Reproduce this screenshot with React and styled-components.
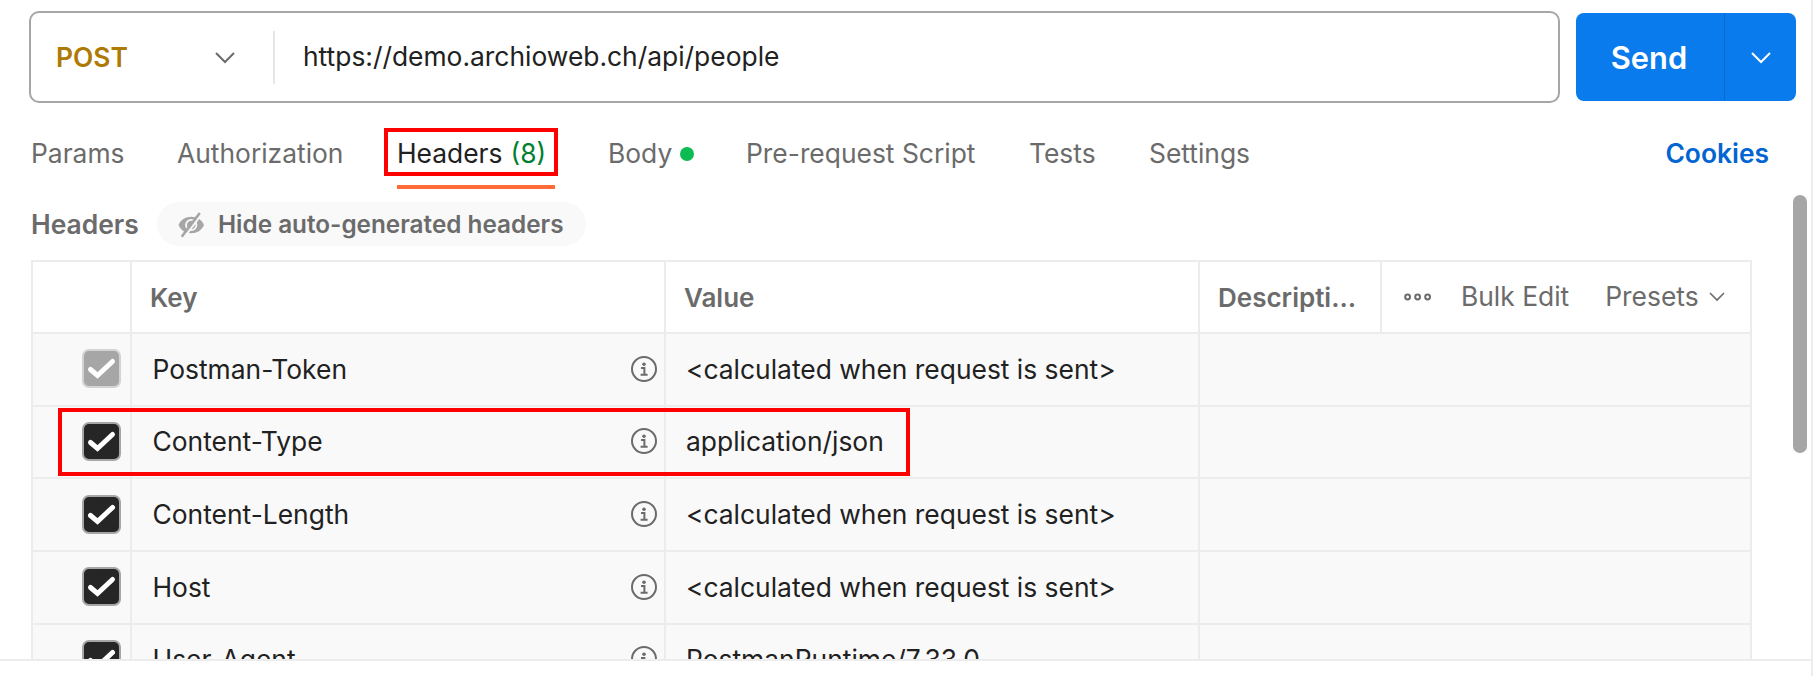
import React from "react";
import styled, { createGlobalStyle, css } from "styled-components";

const Global = createGlobalStyle`
  * { box-sizing: border-box; }
  body { margin: 0; background: #fff; overflow: hidden; }
`;

const line = "#ececec";

const Page = styled.div`
  width: 1813px;
  height: 676px;
  border-right: 2px solid ${line};
  font-family: Inter, "Liberation Sans", sans-serif;
  font-size: 26.4px;
  line-height: 32px;
  color: #6b6b6b;
  white-space: nowrap;
`;

const RequestBar = styled.div`
  display: flex;
  align-items: center;
  gap: 16px;
  padding: 11px 15px 0 29px;
`;

const UrlBox = styled.div`
  display: flex;
  align-items: center;
  flex: 1;
  height: 92px;
  border: 2px solid #a6a6a6;
  border-radius: 10px;
`;

const Method = styled.div`
  display: flex;
  align-items: center;
  justify-content: space-between;
  width: 244px;
  height: 53px;
  padding: 0 38px 0 25px;
  border-right: 2px solid #e6e6e6;
  color: #ad7a03;
  font-weight: 600;
`;

const Url = styled.span`
  padding: 0 28px 2px;
  color: #212121;
`;

const SendButton = styled.div`
  display: flex;
  width: 220px;
  height: 88px;
  border-radius: 8px;
  background: #097bed;
  color: #fff;
  overflow: hidden;
`;

const SendLabel = styled.span`
  display: flex;
  align-items: center;
  justify-content: center;
  width: 148px;
  padding: 1px 2px 0 0;
  font-size: 30.8px;
  font-weight: 600;
`;

const SendMore = styled.span`
  display: flex;
  align-items: center;
  justify-content: center;
  flex: 1;
  padding-top: 1px;
  border-left: 1px solid #0b6bcb;
`;

const Tabs = styled.div`
  display: flex;
  align-items: flex-start;
  height: 99px;
  padding: 34px 42px 0 31px;
`;

const Tab = styled.div`
  position: relative;
  display: flex;
  align-items: center;
  width: ${(p) => p.$width}px;
  height: 32px;
  color: ${(p) => (p.$active ? "#212121" : "#6b6b6b")};
`;

const Underline = styled.span`
  position: absolute;
  left: 0;
  top: 48px;
  width: 158px;
  height: 4px;
  background: #ff6c37;
`;

const Count = styled.span`
  margin-left: 8px;
  color: #007f31;
`;

const Dot = styled.span`
  width: 14px;
  height: 14px;
  margin: 2px 0 0 8px;
  border-radius: 50%;
  background: #0cbb52;
`;

const Cookies = styled.span`
  margin-left: auto;
  color: #0265d2;
  font-weight: 600;
`;

const Highlight = styled.div`
  position: absolute;
  left: ${(p) => p.$x}px;
  top: ${(p) => p.$y}px;
  width: ${(p) => p.$w}px;
  height: ${(p) => p.$h}px;
  border: 4px solid #f00;
  pointer-events: none;
`;

const SubHeader = styled.div`
  display: flex;
  align-items: center;
  height: 44px;
  padding-left: 31px;
  font-weight: 600;
`;

const Pill = styled.div`
  display: flex;
  align-items: center;
  gap: 13px;
  width: 429px;
  height: 44px;
  margin-left: auto;
  margin-right: 1225px;
  padding-left: 21px;
  border-radius: 22px;
  background: #f9f9f9;
  font-size: 24.3px;
`;

const TableClip = styled.div`
  height: 415px;
  padding: 14px 0 0 31px;
  border-bottom: 2px solid ${line};
  overflow: hidden;
`;

const Table = styled.div`
  position: relative;
  width: 1721px;
  border: 2px solid ${line};
  border-bottom: 0;
`;

const Row = styled.div`
  display: grid;
  grid-template-columns: ${(p) => (p.$head ? "99px 534px 534px 182px 1fr" : "99px 534px 534px 1fr")};
  height: ${(p) => (p.$head ? 72 : 72.7)}px;
  border-bottom: 2px solid ${line};
  background: ${(p) => (p.$head ? "#fff" : "#f9f9f9")};
`;

const Cell = styled.div`
  display: flex;
  align-items: center;
  justify-content: space-between;
  padding: 0 7px 1.4px ${(p) => p.$pad || 20}px;
  border-right: 2px solid ${line};
  color: #212121;
  &:last-child { border-right: 0; }
  ${(p) => p.$head && css`
    padding: 1px 0 0 18px;
    color: #6b6b6b;
    font-size: 26px;
    font-weight: 600;
  `}
`;

const Actions = styled.div`
  display: flex;
  align-items: center;
  padding-left: 22px;
`;

const Action = styled.span`
  margin-left: ${(p) => p.$gap}px;
  padding-bottom: 2px;
`;

const Scrollbar = styled.div`
  position: absolute;
  left: 1793px;
  top: 195px;
  width: 14px;
  height: 258px;
  border-radius: 7px;
  background: #a6a6a6;
`;

const Icon = styled.svg`
  display: block;
  flex: none;
  margin-left: ${(p) => p.$ml || 0}px;
  margin-top: ${(p) => p.$mt || 0}px;
`;

const Chevron = ({ w = 20, h = 12, color = "#6b6b6b", ml, mt, stroke = 2 }) => (
  <Icon $ml={ml} $mt={mt} width={w} height={h} viewBox={`0 0 ${w} ${h}`} fill="none" stroke={color} strokeWidth={stroke}>
    <path d={`M1 1L${w / 2} ${h - 2}L${w - 1} 1`} />
  </Icon>
);

const Check = ({ muted }) => (
  <Icon width="39" height="39" viewBox="0 0 39 39">
    <rect x="1" y="1" width="37" height="37" rx="6" fill={muted ? "#a6a6a6" : "#262626"} stroke={muted ? "#d3d3d3" : "#a6a6a6"} strokeWidth="2" />
    <path d="M8.5 20.5L15.5 26.5L30.5 12.5" fill="none" stroke="#fff" strokeWidth="5" strokeLinecap="round" />
  </Icon>
);

const Info = () => (
  <Icon width="26" height="26" viewBox="0 0 26 26" fill="none" stroke="#6b6b6b">
    <circle cx="13" cy="13" r="12" strokeWidth="2" />
    <circle cx="13" cy="8.2" r="1.8" fill="#6b6b6b" stroke="none" />
    <path d="M10 12H13.4V18.8M9.6 18.8H16.6" strokeWidth="2" />
  </Icon>
);

const EyeOff = () => (
  <Icon $mt={1} width="27" height="26" viewBox="0 0 27 26" fill="none">
    <path d="M0.5 13C3 7.5 7.5 4.8 13.2 4.8S23.5 7.5 26 13C23.5 18.5 19 21.2 13.2 21.2S3 18.5 0.5 13Z" fill="#a6a6a6" />
    <circle cx="13.2" cy="13" r="5.2" stroke="#f9f9f9" strokeWidth="1.8" />
    <path d="M23.8 1.8L6.2 25.3" stroke="#f9f9f9" strokeWidth="2" />
    <path d="M21.8 1L3.7 24.8" stroke="#a6a6a6" strokeWidth="2.6" />
  </Icon>
);

const Dots = () => (
  <Icon width="28" height="8" viewBox="0 0 28 8" fill="none" stroke="#6b6b6b" strokeWidth="2">
    <circle cx="3.6" cy="4" r="2.4" />
    <circle cx="13.6" cy="4" r="2.4" />
    <circle cx="23.6" cy="4" r="2.4" />
  </Icon>
);

const calc = "<calculated when request is sent>";
const rows = [
  ["Postman-Token", calc, true],
  ["Content-Type", "application/json"],
  ["Content-Length", calc],
  ["Host", calc],
  ["User-Agent", "PostmanRuntime/7.33.0"],
];

export default function App() {
  return (
    <Page>
      <Global />
      <RequestBar>
        <UrlBox>
          <Method>POST<Chevron mt={2} /></Method>
          <Url>https://demo.archioweb.ch/api/people</Url>
        </UrlBox>
        <SendButton>
          <SendLabel>Send</SendLabel>
          <SendMore><Chevron color="#fff" /></SendMore>
        </SendButton>
      </RequestBar>
      <Tabs>
        <Tab $width={146}>Params</Tab>
        <Tab $width={220}>Authorization</Tab>
        <Tab $width={211} $active>
          Headers<Count>(8)</Count>
          <Underline />
          <Highlight $x={-13} $y={-9} $w={174} $h={48} />
        </Tab>
        <Tab $width={138}>Body<Dot /></Tab>
        <Tab $width={283}>Pre-request Script</Tab>
        <Tab $width={120}>Tests</Tab>
        <Tab $width={120}>Settings</Tab>
        <Cookies>Cookies</Cookies>
      </Tabs>
      <SubHeader>
        Headers
        <Pill><EyeOff />Hide auto-generated headers</Pill>
      </SubHeader>
      <TableClip>
        <Table>
          <Row $head>
            <Cell $head />
            <Cell $head>Key</Cell>
            <Cell $head>Value</Cell>
            <Cell $head>Descripti…</Cell>
            <Actions>
              <Dots />
              <Action $gap={29}>Bulk Edit</Action>
              <Action $gap={36}>Presets</Action>
              <Chevron w={16} h={10} ml={10} stroke={1.6} />
            </Actions>
          </Row>
          {rows.map(([key, value, muted]) => (
            <Row key={key}>
              <Cell $pad={49}><Check muted={muted} /></Cell>
              <Cell $pad={20.5}>{key}<Info /></Cell>
              <Cell>{value}</Cell>
              <Cell />
            </Row>
          ))}
          <Highlight $x={25} $y={146} $w={852} $h={68} />
        </Table>
      </TableClip>
      <Scrollbar />
    </Page>
  );
}
